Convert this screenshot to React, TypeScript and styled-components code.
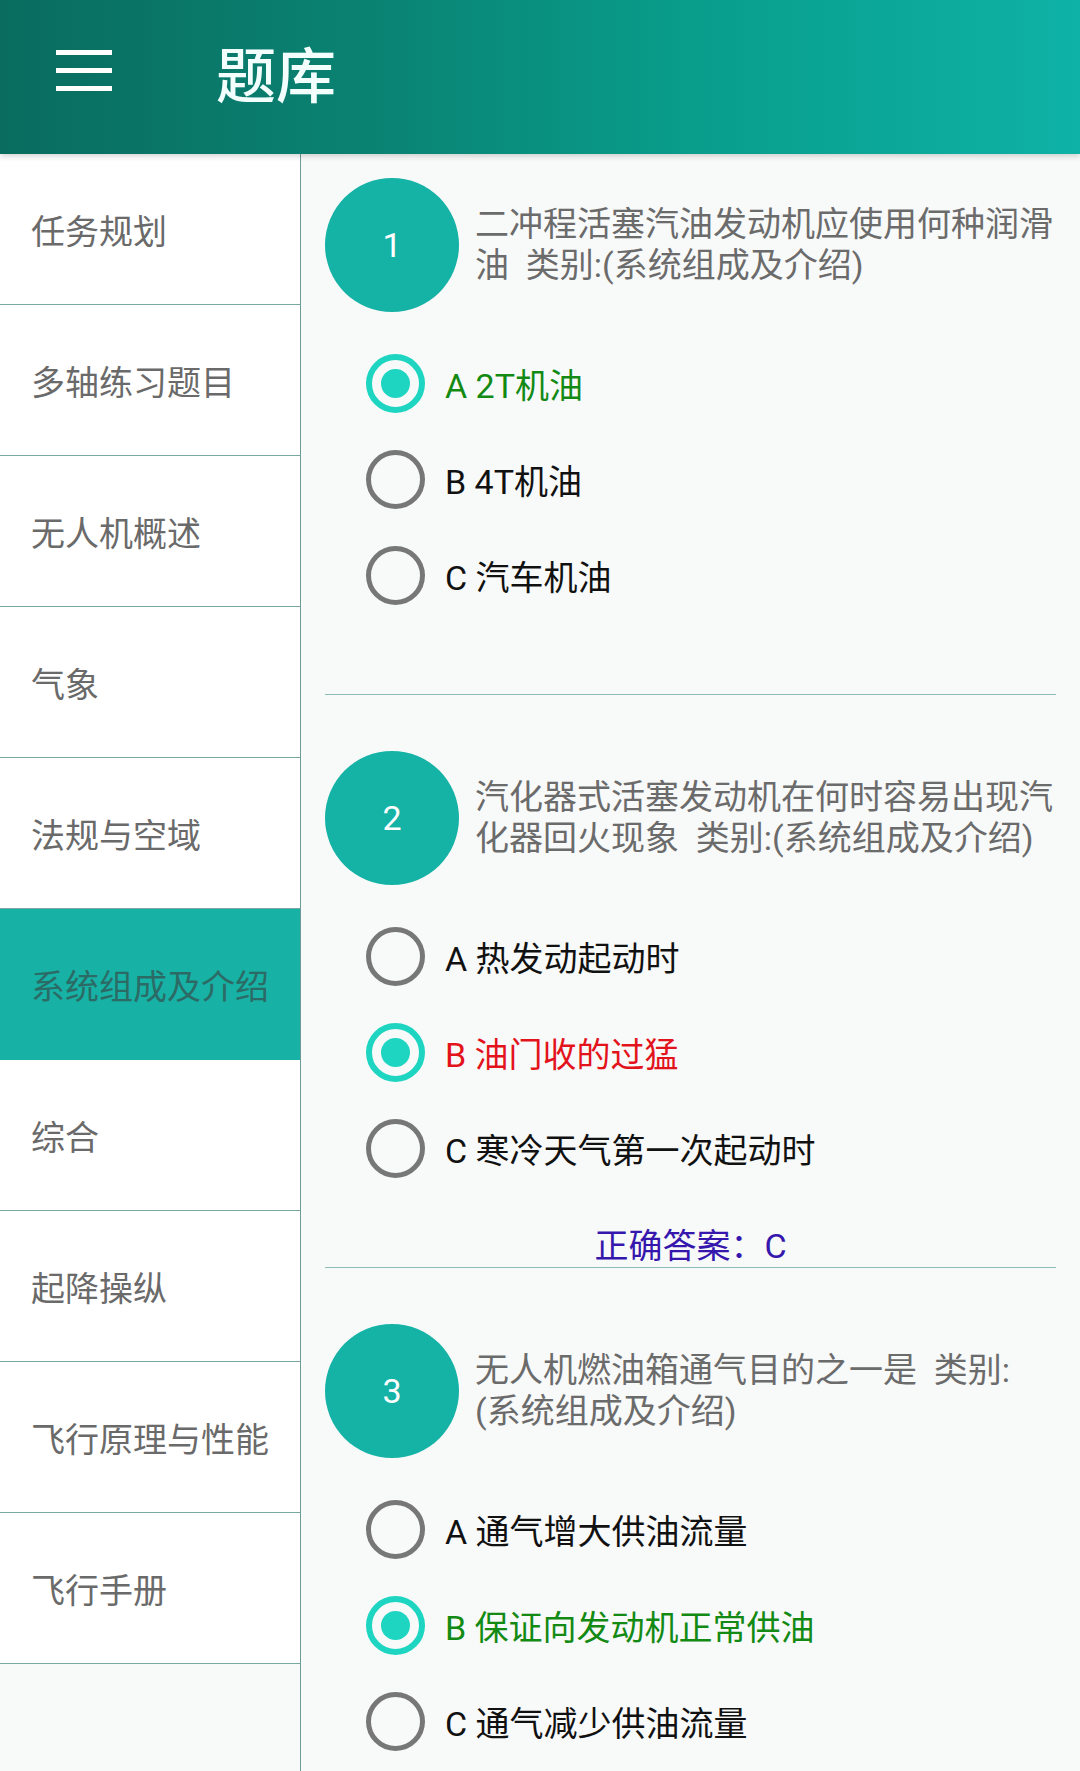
import React from "react";
import styled, { createGlobalStyle } from "styled-components";

const GlobalStyle = createGlobalStyle`
    html, body {
        margin: 0;
        padding: 0;
    }
    body {
        font-family: Roboto, "Noto Sans CJK SC", sans-serif;
        background: #f8f9f9;
    }
`;

const Page = styled.div`
    width: 1080px;
    height: 1771px;
    display: flex;
    flex-direction: column;
    overflow: hidden;
    background: #f8f9f9;
`;

const Toolbar = styled.header`
    flex-shrink: 0;
    height: 154px;
    display: flex;
    align-items: center;
    padding-left: 56px;
    background: linear-gradient(
        90deg,
        #096c5f 0%,
        #0a8373 35%,
        #099e8c 65%,
        #0eb2a6 100%
    );
    box-shadow: 0 2px 6px rgba(0, 0, 0, 0.18);
    position: relative;
    z-index: 1;
`;

const MenuButton = styled.div`
    width: 56px;
    display: flex;
    flex-direction: column;
    gap: 13px;
    margin-bottom: 14px;
    span {
        display: block;
        height: 5px;
        background: #ffffff;
    }
`;

const Title = styled.h1`
    margin: 0 0 12px 104px;
    font-size: 60px;
    font-weight: 500;
    color: #f2fffd;
`;

const Body = styled.div`
    flex: 1;
    display: flex;
    min-height: 0;
`;

const Sidebar = styled.nav`
    width: 300px;
    flex-shrink: 0;
    border-right: 1px solid #6e9b96;
    background: #f8f9f9;
`;

const NavItem = styled.div<{ $active?: boolean }>`
    height: 150px;
    display: flex;
    align-items: center;
    padding-left: 31px;
    font-size: 34px;
    color: ${({ $active }) => ($active ? "#2c6b65" : "#6a6a6a")};
    background: ${({ $active }) => ($active ? "#17b2a5" : "#ffffff")};
    border-bottom: 1px solid
        ${({ $active }) => ($active ? "#17b2a5" : "#79a7a1")};
`;

const Content = styled.main`
    flex: 1;
    padding: 24px 24px 0;
    overflow: hidden;
`;

const QuestionBlock = styled.section`
    margin-bottom: 56px;
`;

const QuestionHead = styled.div`
    display: flex;
    align-items: center;
    gap: 16px;
`;

const Badge = styled.div`
    flex-shrink: 0;
    width: 134px;
    height: 134px;
    border-radius: 50%;
    background: #15b2a6;
    color: #ffffff;
    font-size: 34px;
    display: flex;
    align-items: center;
    justify-content: center;
`;

const QuestionText = styled.div`
    font-size: 34px;
    line-height: 41px;
    color: #6b6b6b;
    white-space: pre-wrap;
`;

const Options = styled.div`
    margin-top: 23px;
`;

const OptionRow = styled.div`
    height: 96px;
    display: flex;
    align-items: center;
    padding-left: 41px;
    gap: 20px;
`;

const Radio = styled.span<{ $checked?: boolean }>`
    box-sizing: border-box;
    width: 59px;
    height: 59px;
    border-radius: 50%;
    border: ${({ $checked }) =>
        $checked ? "6px solid #1ed5c1" : "5.5px solid #777777"};
    display: flex;
    align-items: center;
    justify-content: center;
    &::after {
        content: "";
        display: ${({ $checked }) => ($checked ? "block" : "none")};
        width: 29px;
        height: 29px;
        border-radius: 50%;
        background: #1ed5c1;
    }
`;

type TState = "normal" | "right" | "wrong";

const OptionLabel = styled.span<{ $state: TState }>`
    font-size: 34px;
    color: ${({ $state }) =>
        $state === "right"
            ? "#138a13"
            : $state === "wrong"
            ? "#e3131c"
            : "#111111"};
`;

const Answer = styled.div`
    margin-top: 29px;
    height: 42px;
    line-height: 42px;
    text-align: center;
    font-size: 34px;
    color: #3517ad;
`;

const Divider = styled.hr`
    margin: 0;
    border: 0;
    height: 1px;
    background: #8dbcb6;
`;

const categories = [
    "任务规划",
    "多轴练习题目",
    "无人机概述",
    "气象",
    "法规与空域",
    "系统组成及介绍",
    "综合",
    "起降操纵",
    "飞行原理与性能",
    "飞行手册",
];

type TQuestion = {
    text: string;
    category: string;
    options: string[];
    chosen: number;
    correct: number;
};

const questions: TQuestion[] = [
    {
        text: "二冲程活塞汽油发动机应使用何种润滑油",
        category: "系统组成及介绍",
        options: ["A 2T机油", "B 4T机油", "C 汽车机油"],
        chosen: 0,
        correct: 0,
    },
    {
        text: "汽化器式活塞发动机在何时容易出现汽化器回火现象",
        category: "系统组成及介绍",
        options: ["A 热发动起动时", "B 油门收的过猛", "C 寒冷天气第一次起动时"],
        chosen: 1,
        correct: 2,
    },
    {
        text: "无人机燃油箱通气目的之一是",
        category: "系统组成及介绍",
        options: ["A 通气增大供油流量", "B 保证向发动机正常供油", "C 通气减少供油流量"],
        chosen: 1,
        correct: 1,
    },
];

const letters = ["A", "B", "C", "D"];

// category label is never split across lines (word joiners between glyphs)
const keepTogether = (s: string) => s.split("").join("\u2060");

const questionLine = (q: TQuestion) =>
    `${q.text}  类别:${keepTogether(`(${q.category})`)}`;

export default function App() {
    return (
        <Page>
            <GlobalStyle />
            <Toolbar>
                <MenuButton>
                    <span />
                    <span />
                    <span />
                </MenuButton>
                <Title>题库</Title>
            </Toolbar>
            <Body>
                <Sidebar>
                    {categories.map((c) => (
                        <NavItem key={c} $active={c === "系统组成及介绍"}>
                            {c}
                        </NavItem>
                    ))}
                </Sidebar>
                <Content>
                    {questions.map((q, i) => {
                        const wrong = q.chosen !== q.correct;
                        return (
                            <QuestionBlock key={i}>
                                <QuestionHead>
                                    <Badge>{i + 1}</Badge>
                                    <QuestionText>{questionLine(q)}</QuestionText>
                                </QuestionHead>
                                <Options>
                                    {q.options.map((o, j) => {
                                        const checked = j === q.chosen;
                                        const state: TState = !checked
                                            ? "normal"
                                            : wrong
                                            ? "wrong"
                                            : "right";
                                        return (
                                            <OptionRow key={j}>
                                                <Radio $checked={checked} />
                                                <OptionLabel $state={state}>
                                                    {o}
                                                </OptionLabel>
                                            </OptionRow>
                                        );
                                    })}
                                </Options>
                                <Answer>
                                    {wrong
                                        ? `正确答案：${letters[q.correct]}`
                                        : ""}
                                </Answer>
                                <Divider />
                            </QuestionBlock>
                        );
                    })}
                </Content>
            </Body>
        </Page>
    );
}
